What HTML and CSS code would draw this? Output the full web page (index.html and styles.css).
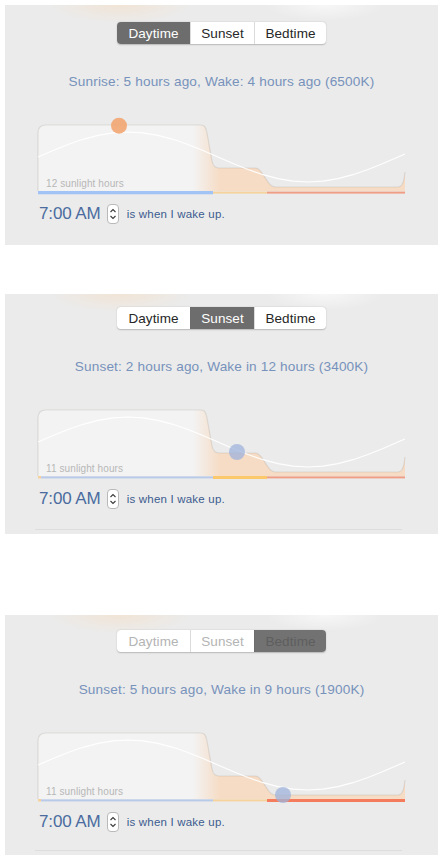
FILE: index.html
```html
<!DOCTYPE html>
<html lang="en">
<head>
<meta charset="utf-8">
<title>Flux schedule</title>
<link rel="stylesheet" href="styles.css">
</head>
<body>
<main class="page">

  <section class="panel panel--day">
    <div class="seg">
      <span class="seg__item is-active">Daytime</span>
      <span class="seg__item">Sunset</span>
      <span class="seg__item">Bedtime</span>
    </div>
    <p class="status">Sunrise: 5 hours ago, Wake: 4 hours ago (6500K)</p>
    <svg class="chart" width="367" height="70" viewBox="0 0 367 70">
      <defs>
        <linearGradient id="fillA" gradientUnits="userSpaceOnUse" x1="155" y1="0" x2="182" y2="0">
          <stop offset="0" stop-color="#f3f3f3"/>
          <stop offset="1" stop-color="#f6dcc5"/>
        </linearGradient>
      </defs>
      <path class="chart__area" fill="url(#fillA)" d="M0,67 V9 Q0,1 8,1 H163 C167,1 168,4 169,9 L174,37 C175,42 177,44 181,44 H217 C220,44 222,46 224,49 L230,58 C232,61 234,63 238,63 H360 C363,63 365,60 366,55 L367,48 V67 Z"/>
      <path class="chart__edge" d="M0,67 V9 Q0,1 8,1 H163 C167,1 168,4 169,9 L174,37 C175,42 177,44 181,44 H217 C220,44 222,46 224,49 L230,58 C232,61 234,63 238,63 H360 C363,63 365,60 366,55 L367,48"/>
      <polyline class="chart__sine" points="0,33 15,26.5 30,20.5 45,15.3 60,11.3 75,8.9 90,8 105,8.9 120,11.3 135,15.3 150,20.5 165,26.5 180,33 195,39.5 210,45.5 225,50.7 240,54.7 255,57.2 270,58 285,57.2 300,54.7 315,50.7 330,45.5 345,39.5 360,33 367,30"/>
      <text class="chart__label" x="8" y="62.5">12 sunlight hours</text>
      <rect class="bar bar--blue-on" x="0" y="67" width="175" height="3.3"/>
      <rect class="bar bar--yellow" x="175" y="67.6" width="54" height="2"/>
      <rect class="bar bar--red" x="229" y="67.6" width="138" height="2"/>
      <circle class="dot dot--sun" cx="81" cy="1.7" r="8"/>
    </svg>
    <div class="wake">
      <span class="wake__time">7:00 AM</span>
      <span class="stepper"><svg width="10" height="18" viewBox="0 0 10 18"><polyline points="2.5,7 5,4.5 7.5,7"/><polyline points="2.5,11 5,13.5 7.5,11"/></svg></span>
      <span class="wake__label">is when I wake up.</span>
    </div>
  </section>

  <section class="panel panel--sunset">
    <div class="seg">
      <span class="seg__item">Daytime</span>
      <span class="seg__item is-active">Sunset</span>
      <span class="seg__item">Bedtime</span>
    </div>
    <p class="status">Sunset: 2 hours ago, Wake in 12 hours (3400K)</p>
    <svg class="chart" width="367" height="70" viewBox="0 0 367 70">
      <defs>
        <linearGradient id="fillB" gradientUnits="userSpaceOnUse" x1="155" y1="0" x2="182" y2="0">
          <stop offset="0" stop-color="#f3f3f3"/>
          <stop offset="1" stop-color="#f6dcc5"/>
        </linearGradient>
      </defs>
      <path class="chart__area" fill="url(#fillB)" d="M0,67 V9 Q0,1 8,1 H163 C167,1 168,4 169,9 L174,37 C175,42 177,44 181,44 H217 C220,44 222,46 224,49 L230,58 C232,61 234,63 238,63 H360 C363,63 365,60 366,55 L367,48 V67 Z"/>
      <path class="chart__edge" d="M0,67 V9 Q0,1 8,1 H163 C167,1 168,4 169,9 L174,37 C175,42 177,44 181,44 H217 C220,44 222,46 224,49 L230,58 C232,61 234,63 238,63 H360 C363,63 365,60 366,55 L367,48"/>
      <polyline class="chart__sine" points="0,33 15,26.5 30,20.5 45,15.3 60,11.3 75,8.9 90,8 105,8.9 120,11.3 135,15.3 150,20.5 165,26.5 180,33 195,39.5 210,45.5 225,50.7 240,54.7 255,57.2 270,58 285,57.2 300,54.7 315,50.7 330,45.5 345,39.5 360,33 367,30"/>
      <text class="chart__label" x="8" y="62.5">11 sunlight hours</text>
      <rect class="bar bar--yellow" x="0" y="67" width="3" height="2.5"/>
      <rect class="bar bar--blue" x="3" y="67.4" width="172" height="2"/>
      <rect class="bar bar--yellow-on" x="175" y="67" width="54" height="3"/>
      <rect class="bar bar--red" x="229" y="67.4" width="138" height="2"/>
      <circle class="dot dot--moon" cx="199" cy="43" r="8"/>
    </svg>
    <div class="wake">
      <span class="wake__time">7:00 AM</span>
      <span class="stepper"><svg width="10" height="18" viewBox="0 0 10 18"><polyline points="2.5,7 5,4.5 7.5,7"/><polyline points="2.5,11 5,13.5 7.5,11"/></svg></span>
      <span class="wake__label">is when I wake up.</span>
    </div>
    <div class="divider"></div>
  </section>

  <section class="panel panel--bed">
    <div class="seg seg--dim">
      <span class="seg__item">Daytime</span>
      <span class="seg__item">Sunset</span>
      <span class="seg__item is-active">Bedtime</span>
    </div>
    <p class="status">Sunset: 5 hours ago, Wake in 9 hours (1900K)</p>
    <svg class="chart" width="367" height="70" viewBox="0 0 367 70">
      <defs>
        <linearGradient id="fillC" gradientUnits="userSpaceOnUse" x1="155" y1="0" x2="182" y2="0">
          <stop offset="0" stop-color="#f3f3f3"/>
          <stop offset="1" stop-color="#f6dcc5"/>
        </linearGradient>
      </defs>
      <path class="chart__area" fill="url(#fillC)" d="M0,67 V9 Q0,1 8,1 H163 C167,1 168,4 169,9 L174,37 C175,42 177,44 181,44 H217 C220,44 222,46 224,49 L230,58 C232,61 234,63 238,63 H360 C363,63 365,60 366,55 L367,48 V67 Z"/>
      <path class="chart__edge" d="M0,67 V9 Q0,1 8,1 H163 C167,1 168,4 169,9 L174,37 C175,42 177,44 181,44 H217 C220,44 222,46 224,49 L230,58 C232,61 234,63 238,63 H360 C363,63 365,60 366,55 L367,48"/>
      <polyline class="chart__sine" points="0,33 15,26.5 30,20.5 45,15.3 60,11.3 75,8.9 90,8 105,8.9 120,11.3 135,15.3 150,20.5 165,26.5 180,33 195,39.5 210,45.5 225,50.7 240,54.7 255,57.2 270,58 285,57.2 300,54.7 315,50.7 330,45.5 345,39.5 360,33 367,30"/>
      <text class="chart__label" x="8" y="62.5">11 sunlight hours</text>
      <rect class="bar bar--yellow" x="0" y="67" width="3" height="2.5"/>
      <rect class="bar bar--blue" x="3" y="67.4" width="172" height="2"/>
      <rect class="bar bar--yellow" x="175" y="67.4" width="54" height="2"/>
      <rect class="bar bar--red-on" x="229" y="67" width="138" height="3"/>
      <circle class="dot dot--moon" cx="245" cy="63" r="8"/>
    </svg>
    <div class="wake">
      <span class="wake__time">7:00 AM</span>
      <span class="stepper"><svg width="10" height="18" viewBox="0 0 10 18"><polyline points="2.5,7 5,4.5 7.5,7"/><polyline points="2.5,11 5,13.5 7.5,11"/></svg></span>
      <span class="wake__label">is when I wake up.</span>
    </div>
    <div class="divider"></div>
  </section>

</main>
</body>
</html>
```

FILE: styles.css
```css
* { box-sizing: border-box; }

html, body {
  margin: 0;
  padding: 0;
  background: #ffffff;
}

body {
  font-family: "Liberation Sans", Arial, Helvetica, sans-serif;
}

.page {
  display: flex;
  flex-direction: column;
  padding: 5px 6px 0 5px;
}

.panel {
  width: 433px;
  height: 240px;
  display: flex;
  flex-direction: column;
  align-items: flex-start;
  padding-left: 33px;
  background:
    radial-gradient(ellipse 70px 18px at 115px 0, rgba(250, 218, 182, 0.4), rgba(250, 218, 182, 0) 100%),
    radial-gradient(ellipse 60px 16px at 320px 0, rgba(255, 255, 255, 0.6), rgba(255, 255, 255, 0) 100%),
    #ebebeb;
}

.panel--day { padding-top: 17px; }
.panel--sunset { padding-top: 13px; margin-top: 49px; }
.panel--bed { padding-top: 15px; margin-top: 81px; }

/* segmented control */
.seg {
  align-self: center;
  margin-left: -33px;
  display: flex;
  height: 22px;
  background: #ffffff;
  border-radius: 4px;
  box-shadow: 0 0.5px 1.5px rgba(0, 0, 0, 0.22);
  overflow: hidden;
}

.seg__item {
  display: flex;
  align-items: center;
  justify-content: center;
  font-size: 13.5px;
  letter-spacing: 0.1px;
  color: #262626;
  border-left: 1px solid #dcdcdc;
}

.seg__item:nth-child(1) { width: 73px; border-left: 0; }
.seg__item:nth-child(2) { width: 64px; }
.seg__item:nth-child(3) { width: 72px; }

.seg__item.is-active {
  background: #6d6d6d;
  color: #ffffff;
  border-left-color: #6d6d6d;
}

.seg--dim .seg__item { color: #b4b4b4; }
.seg--dim .seg__item.is-active { background: #727272; color: #5e5e5e; }

/* status line */
.status {
  align-self: center;
  margin: 30px 0 0 -33px;
  font-size: 13.6px;
  letter-spacing: 0.15px;
  line-height: 16px;
  color: #7792bb;
}

/* chart */
.chart {
  display: block;
  margin-top: 34px;
  overflow: visible;
}

.chart__edge {
  fill: none;
  stroke: rgba(120, 110, 100, 0.16);
  stroke-width: 1.2;
}

.chart__sine {
  fill: none;
  stroke: #ffffff;
  stroke-width: 1.2;
  opacity: 0.95;
}

.chart__label {
  font-family: "Liberation Sans", Arial, sans-serif;
  font-size: 10px;
  letter-spacing: 0.1px;
  fill: #b7b7b7;
}

.bar--blue-on { fill: #a2c3f5; }
.bar--blue { fill: #b8cae8; }
.bar--yellow { fill: #f6d39d; }
.bar--yellow-on { fill: #fbc86b; }
.bar--red { fill: #ef9e85; }
.bar--red-on { fill: #f47b5c; }

.dot--sun { fill: #f3a470; opacity: 0.88; }
.dot--moon { fill: #9fb3db; opacity: 0.75; }

/* wake row */
.wake {
  display: flex;
  align-items: center;
  height: 20px;
  margin: 10px 0 0 1px;
}

.wake__time {
  font-size: 17px;
  color: #4a6b9f;
  letter-spacing: -0.1px;
}

.stepper {
  display: flex;
  align-items: center;
  justify-content: center;
  width: 12px;
  height: 20px;
  margin-left: 6px;
  background: #ffffff;
  border: 1px solid #b9b9b9;
  border-radius: 4px;
}

.stepper polyline {
  fill: none;
  stroke: #3a3a3a;
  stroke-width: 1.1;
}

.wake__label {
  margin-left: 8px;
  font-size: 11.5px;
  letter-spacing: 0.2px;
  color: #3c5c8f;
}

.divider {
  margin-top: auto;
  margin-bottom: 4px;
  margin-left: -3px;
  width: 367px;
  height: 1px;
  background: #dddddd;
}
```
